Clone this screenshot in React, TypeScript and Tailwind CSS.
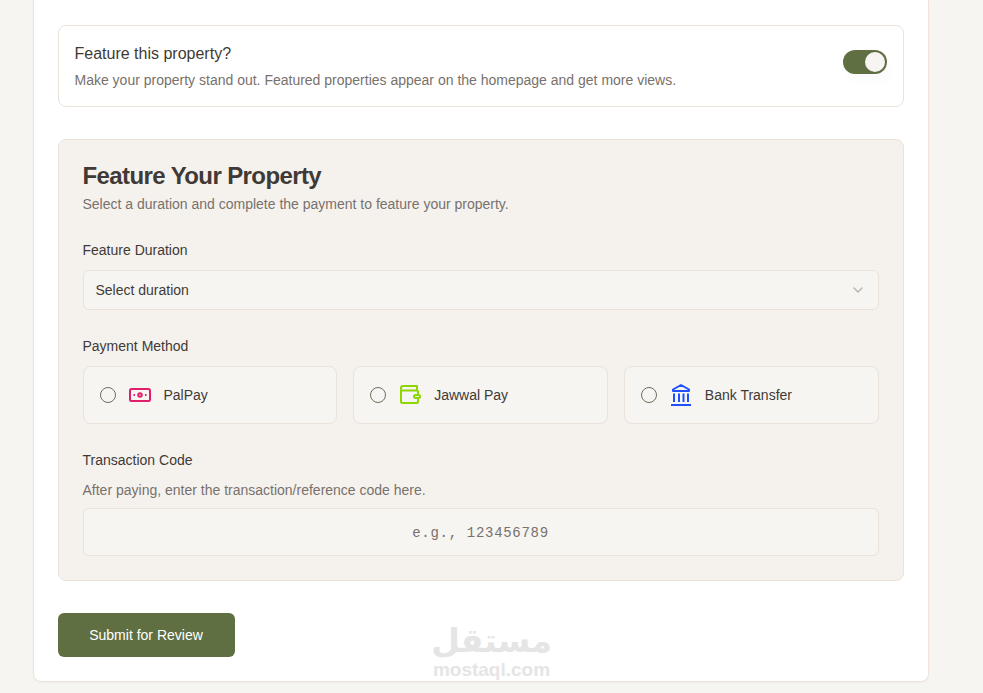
import { ChevronDown } from 'lucide-react';

const methods = [
  { id: 'palpay', label: 'PalPay', icon: <PalPayIcon /> },
  { id: 'jawwal', label: 'Jawwal Pay', icon: <JawwalIcon /> },
  { id: 'bank', label: 'Bank Transfer', icon: <BankIcon /> },
];

function PalPayIcon() {
  return (
    <svg width="24" height="24" viewBox="0 0 24 24" fill="none" className="text-[#e01f6b]">
      <rect x="2" y="6" width="20" height="12" rx="1.5" stroke="currentColor" strokeWidth="2" />
      <circle cx="12" cy="12" r="1.75" stroke="currentColor" strokeWidth="2" />
      <path d="M5.5 12h1.5M17 12h1.5" stroke="currentColor" strokeWidth="2" />
    </svg>
  );
}

function JawwalIcon() {
  return (
    <svg width="24" height="24" viewBox="0 0 24 24" fill="none" className="text-[#8ed600]">
      <path d="M19 7.5V3H5a2 2 0 0 0-2 2v13.5A1.5 1.5 0 0 0 4.5 20H19a1 1 0 0 0 1-1v-4M3 7.5h16a1 1 0 0 1 1 1V12" stroke="currentColor" strokeWidth="2" strokeLinejoin="round" />
      <rect x="16" y="12" width="6" height="3" rx="1.5" stroke="currentColor" strokeWidth="2" />
    </svg>
  );
}

function BankIcon() {
  return (
    <svg width="24" height="24" viewBox="0 0 24 24" fill="none" className="text-[#1f4fff]">
      <path d="M12 2 4 6.500V8h16V6.500L12 2Z" stroke="currentColor" strokeWidth="2" strokeLinejoin="round" />
      <path d="M5 10.500v8.500M10 10.500v8.500M14.500 10.500v8.500M19 10.500v8.500" stroke="currentColor" strokeWidth="2" />
      <path d="M2 22h20" stroke="currentColor" strokeWidth="2" />
    </svg>
  );
}

export default function App() {
  return (
    <div className="h-[693px] overflow-hidden bg-[#f7f5f2] font-['Liberation_Sans',Arial,sans-serif]">
      <div className="relative ml-[32.5px] w-[896px] rounded-b-lg border border-t-0 border-[#eee2da] bg-white px-6 pt-[25px] pb-6 shadow-[0_1px_2px_rgba(0,0,0,0.03)]">
        {/* Toggle */}
        <div className="flex h-[82px] items-center justify-between rounded-lg border border-[#ebe2da] bg-white px-4">
          <div>
            <p className="text-base leading-6 text-[#3f3a36]">Feature this property?</p>
            <p className="mt-1 text-sm leading-5 text-[#78716c]">
              Make your property stand out. Featured properties appear on the homepage and get more views.
            </p>
          </div>
          <div className="mb-2 flex h-6 w-11 items-center justify-end rounded-full bg-[#606f42] pr-0.5 shadow-[4px_8px_10px_rgba(0,0,0,0.02)]">
            <span className="h-5 w-5 rounded-full bg-[#f7f5f2]" />
          </div>
        </div>

        {/* Payment section */}
        <div className="mt-8 rounded-lg border border-[#ebe2da] bg-[#f5f2ee] p-6">
          <h2 className="text-2xl leading-6 font-bold tracking-tight text-[#3f3a36]">Feature Your Property</h2>
          <p className="mt-[6px] text-sm leading-5 text-[#78716c]">Select a duration and complete the payment to feature your property.</p>

          <label className="mt-[26px] block text-sm leading-5 text-[#3f3a36]">Feature Duration</label>
          <div className="mt-[10px] flex h-10 items-center justify-between rounded-md border border-[#ebe2da] bg-[#f7f5f2] px-3 text-sm text-[#3f3a36]">
            <span>Select duration</span>
            <ChevronDown className="h-4 w-4 text-[#78716c] opacity-50" />
          </div>

          <label className="mt-[26px] block text-sm leading-5 text-[#3f3a36]">Payment Method</label>
          <div className="mt-[10px] grid grid-cols-3 gap-4">
            {methods.map((m) => (
              <div key={m.id} className="flex h-[58px] items-center gap-3 rounded-lg border border-[#ebe2da] bg-[#f7f5f2] px-4">
                <span className="h-4 w-4 rounded-full border border-[#6b705c]" />
                {m.icon}
                <span className="text-sm text-[#3f3a36]">{m.label}</span>
              </div>
            ))}
          </div>

          <label className="mt-[26px] block text-sm leading-5 text-[#3f3a36]">Transaction Code</label>
          <p className="mt-[10px] text-sm leading-5 text-[#78716c]">After paying, enter the transaction/reference code here.</p>
          <div className="mt-2 flex h-12 items-center justify-center rounded-md border border-[#ebe2da] bg-[#f7f5f2] pt-px font-['Liberation_Mono',monospace] text-sm tracking-wider text-[#78716c]">
            e.g., 123456789
          </div>
        </div>

        <button className="mt-8 h-11 w-[177px] rounded-md bg-[#606f42] text-sm text-white">Submit for Review</button>

        {/* mostaql watermark */}
        <div className="absolute top-[622px] left-[398px] flex w-[120px] flex-col items-center text-[#e5e5e5]">
          <span dir="rtl" lang="ar" className="font-['DejaVu_Sans',sans-serif] text-[33px] leading-[38px] font-bold">مستقل</span>
          <span className="text-[19px] leading-5 font-bold">mostaql.com</span>
        </div>
      </div>
    </div>
  );
}
